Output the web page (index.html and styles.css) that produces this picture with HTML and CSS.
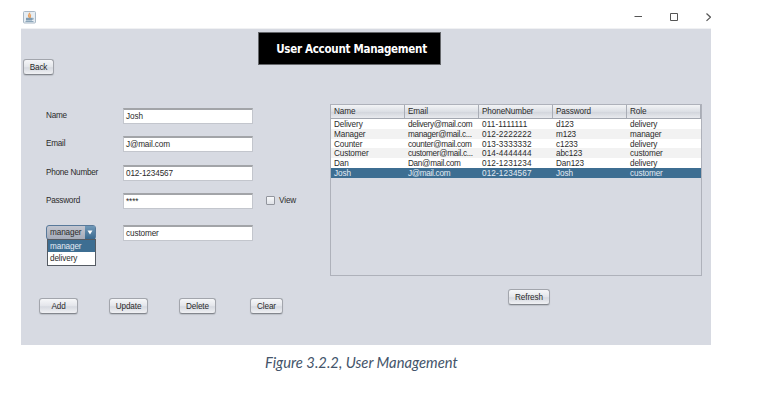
FILE: index.html
```html
<!DOCTYPE html>
<html lang="en">
<head>
<meta charset="utf-8">
<title>User Management</title>
<link rel="stylesheet" href="styles.css">
</head>
<body>
<figure class="figure">
  <div class="window">
    <header class="titlebar">
      <svg class="app-icon" width="13" height="13" viewBox="0 0 13 13">
        <rect x=".5" y=".5" width="12" height="11.5" rx="1" fill="#e6edf3" stroke="#a9b8c6"/>
        <path d="M6.500 1.800c.6 1.300-1.600 2-.8 3.500.5.8.8.9.7 1.700M7.800 3.500C6.500 4.600 7.800 5.500 7.200 6.800" fill="none" stroke="#eaa260" stroke-width="1.400"/>
        <path d="M3 6.800h6v2.700h-6z" fill="#7f9bb1"/>
        <path d="M9 7.300h1.200v1H9M2.500 10.500h8" fill="none" stroke="#8ba5b9"/>
      </svg>
      <svg class="controls" width="78" height="12" viewBox="0 0 78 12" fill="none" stroke="#555" stroke-width="1">
        <path d="M1.500 5.500h7.500M37.500 2.500h7v7h-7z"/>
        <path d="M73.500 2.500l4 3.700-4 3.700" stroke-width="1.200"/>
      </svg>
    </header>
    <main class="content">
      <div class="top">
        <button class="btn back">Back</button>
        <h1 class="banner">User Account Management</h1>
      </div>
      <div class="main">
        <section class="form">
          <div class="row"><label>Name</label><div class="field">Josh</div></div>
          <div class="row"><label>Email</label><div class="field">J@mail.com</div></div>
          <div class="row"><label>Phone Number</label><div class="field">012-1234567</div></div>
          <div class="row"><label>Password</label><div class="field">****</div><div class="check"><i></i>View</div></div>
          <div class="row role">
            <div class="combo">
              <div class="combo-value">manager<svg width="10" height="13" viewBox="0 0 10 13"><path d="M2.500 4.500h5L5 8.500z" fill="#fff"/></svg></div>
              <div class="menu"><div class="option active">manager</div><div class="option">delivery</div></div>
            </div>
            <div class="field">customer</div>
          </div>
          <div class="actions">
            <button class="btn add">Add</button>
            <button class="btn update">Update</button>
            <button class="btn delete">Delete</button>
            <button class="btn clear">Clear</button>
          </div>
        </section>
        <section class="list">
          <div class="table">
            <div class="tr head"><span>Name</span><span>Email</span><span>PhoneNumber</span><span>Password</span><span>Role</span></div>
            <div class="tr"><span>Delivery</span><span class="mail">delivery@mail.com</span><span class="phone">011-1111111</span><span>d123</span><span>delivery</span></div>
            <div class="tr alt"><span>Manager</span><span class="mail">manager@mail.c...</span><span class="phone">012-2222222</span><span>m123</span><span>manager</span></div>
            <div class="tr"><span>Counter</span><span class="mail">counter@mail.com</span><span class="phone">013-3333332</span><span>c1233</span><span>delivery</span></div>
            <div class="tr alt"><span>Customer</span><span class="mail">customer@mail.c...</span><span class="phone">014-4444444</span><span>abc123</span><span>customer</span></div>
            <div class="tr"><span>Dan</span><span class="mail">Dan@mail.com</span><span class="phone">012-1231234</span><span>Dan123</span><span>delivery</span></div>
            <div class="tr selected"><span>Josh</span><span class="mail">J@mail.com</span><span class="phone">012-1234567</span><span>Josh</span><span>customer</span></div>
          </div>
          <button class="btn refresh">Refresh</button>
        </section>
      </div>
    </main>
  </div>
  <figcaption>Figure 3.2.2, User Management</figcaption>
</figure>
</body>
</html>
```

FILE: styles.css
```css
* { box-sizing: border-box; }
body {
  margin: 0;
  background: #fff;
  color: #2b2b2b;
  font-family: "Liberation Sans", Arial, sans-serif;
  font-size: 8.200px;
  letter-spacing: -.12px;
  overflow: hidden;
}
.figure { margin: 0; }
.window { width: 690px; margin-left: 21px; }
.titlebar {
  display: flex;
  justify-content: space-between;
  height: 29px;
  padding: 11px 0 0 2px;
  border-bottom: 1px solid #f0f1f3;
}
.content { height: 316px; background: #d7dae2; }
.top { display: flex; height: 75px; }
.btn {
  display: flex;
  align-items: center;
  justify-content: center;
  height: 16px;
  padding: 0;
  border: 1px solid #a2a5ac;
  border-bottom-color: #83868d;
  border-radius: 3px;
  background: linear-gradient(#f6f7f9, #e3e5ea 50%, #d6d9e0 55%, #f0f1f4);
  color: #2b2b2b;
  font: inherit;
  letter-spacing: -.12px;
  white-space: nowrap;
  box-shadow: 0 1px 1px #bcc0c8;
}
.back { width: 31px; margin: 30px 0 0 2px; }
.banner {
  width: 183px;
  height: 33px;
  margin: 3px 0 0 204px;
  border: 1px solid #65676b;
  background: #000;
  color: #fff;
  font: bold 11.500px/32px "DejaVu Sans Condensed", "Noto Sans", sans-serif;
  letter-spacing: -.28px;
  padding-left: 4px;
  text-align: center;
  white-space: nowrap;
}
.main { display: flex; }
.form { width: 309px; padding: 4px 0 0 25px; }
.row {
  display: flex;
  height: 16px;
  margin-bottom: 12.300px;
}
.row label { width: 77px; line-height: 16px; letter-spacing: -.25px; white-space: nowrap; }
.field {
  width: 130px;
  height: 16px;
  padding-left: 2px;
  border: 1px solid #c3c6cd;
  border-top: 2px solid #a2a4a8;
  background: #fff;
  line-height: 13px;
}
.check { display: flex; align-items: center; margin-left: 13px; gap: 4px; }
.check i {
  width: 9px;
  height: 9px;
  border: 1px solid #92959d;
  border-radius: 1px;
  background: linear-gradient(#f8f9fa, #dfe2e8);
}
.role { margin-top: 16px; }
.combo { position: relative; width: 77px; }
.combo-value {
  display: flex;
  align-items: center;
  justify-content: space-between;
  width: 50px;
  height: 15px;
  padding-left: 3px;
  border: 1px solid #58799a;
  border-radius: 3px;
  background: linear-gradient(#c3c6d0, #a5abb9);
}
.combo-value svg { background: linear-gradient(#7098b8, #39698f); }
.menu {
  position: absolute;
  top: 14px;
  left: 1px;
  width: 49px;
  border: 1px solid #555b63;
  background: #fff;
  z-index: 1;
}
.option { height: 12.500px; padding-left: 2px; line-height: 13px; }
.active { background: #3d6e92; color: #e3ebf2; }
.actions { display: flex; margin: 57.500px 0 0 -7px; }
.add { width: 39px; }
.update { width: 39px; margin-left: 31px; }
.delete { width: 37px; margin-left: 31px; }
.clear { width: 33px; margin-left: 34px; }
.table {
  width: 372px;
  height: 172px;
  border: 1px solid #aeb1ba;
}
.tr {
  display: grid;
  grid-template-columns: repeat(4, 74px) 1fr;
  height: 9.800px;
  background: #fff;
  line-height: 11px;
  white-space: nowrap;
}
.tr span { padding-left: 3px; }
.tr .mail { letter-spacing: -.3px; }
.tr .phone { letter-spacing: .12px; }
.head {
  height: 14px;
  border-bottom: 1px solid #a3a7b0;
  background: linear-gradient(#f3f4f6, #dcdfe5 50%, #d2d5dc 55%, #e8eaee);
  line-height: 13px;
}
.head span { border-right: 1px solid #a9adb6; }
.alt { background: #f2f2f2; }
.selected { background: #3d6e92; color: #e3ebf2; }
.refresh { width: 42px; margin: 13px 0 0 178px; }
figcaption {
  margin: 8px 0 0 265px;
  color: #44546a;
  font: italic 14.750px/18px Lato, sans-serif;
  letter-spacing: 0;
  white-space: nowrap;
}
```
